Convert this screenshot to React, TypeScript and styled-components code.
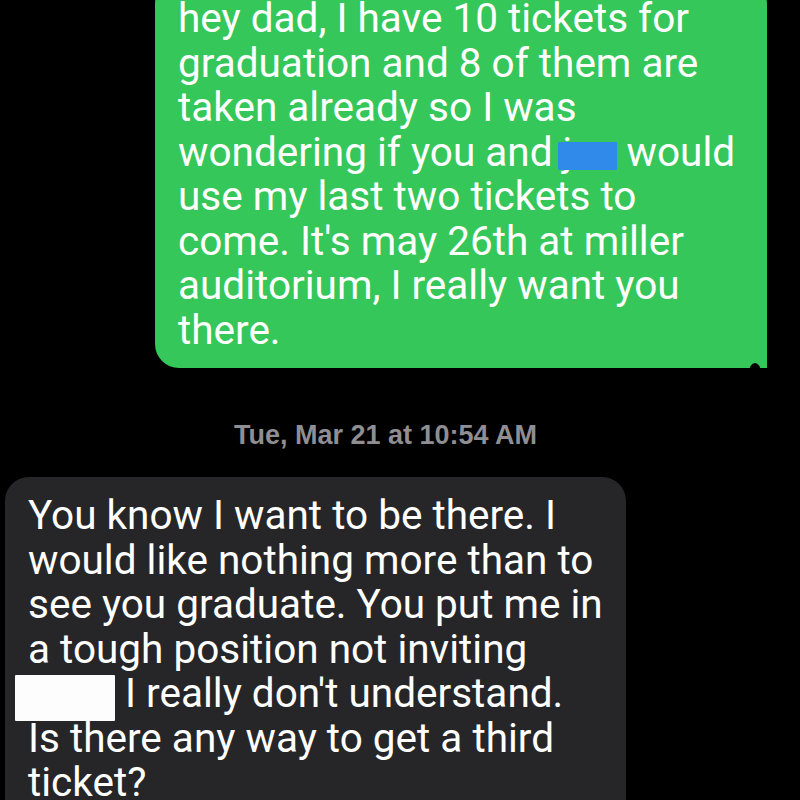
import styled, { createGlobalStyle } from "styled-components";

const GlobalStyle = createGlobalStyle`
    html, body {
        margin: 0;
        padding: 0;
        background: #000;
        overflow: hidden;
    }
`;

const Screen = styled.div`
    height: 800px;
    overflow: hidden;
    display: flex;
    flex-direction: column;
    background: #000;
    font-family: Roboto, "Liberation Sans", Arial, sans-serif;
`;

const Bubble = styled.div<{ $outgoing?: boolean }>`
    position: relative;
    box-sizing: border-box;
    align-self: flex-start;
    color: #fff;
    font-size: 40.5px;
    line-height: 44.5px;
    border-radius: 24px;
    white-space: nowrap;
    ${props => props.$outgoing ? `
        margin-left: 155px;
        margin-top: -20px;
        width: 612px;
        padding: 16px 20px 16px 23px;
        background: #35c759;
        border-bottom-right-radius: 0;

        &::after {
            content: "";
            position: absolute;
            right: 6px;
            bottom: -13px;
            width: 12px;
            height: 18px;
            border-radius: 50%;
            background: #000;
        }
    ` : `
        margin-left: 5px;
        margin-top: 27px;
        width: 621px;
        padding: 16px 20px 20px 23px;
        background: #262628;
    `}
`;

const Line = styled.div`
    display: block;
`;

interface RedactProps {
    $color: string,
    $width: number,
    $bleed: number,
    $top: number,
    $height: number,
}

const Redacted = styled.span<RedactProps>`
    position: relative;
    display: inline-block;
    width: ${props => props.$width}px;

    &::after {
        content: "";
        position: absolute;
        left: -${props => props.$bleed}px;
        right: 0;
        top: ${props => props.$top}px;
        height: ${props => props.$height}px;
        background: ${props => props.$color};
        border-radius: 1px;
    }
`;

const StampRow = styled.div`
    display: flex;
    justify-content: center;
    padding-right: 29px;
    margin-top: 52px;
`;

const Stamp = styled.span`
    color: #8e8e93;
    font-family: "Liberation Sans", Arial, sans-serif;
    font-size: 27px;
    font-weight: 700;
    line-height: 30px;
`;

export default function App()
{
    return (
        <Screen>
            <GlobalStyle />
            <Bubble $outgoing>
                <Line>hey dad, I have 10 tickets for</Line>
                <Line>graduation and 8 of them are</Line>
                <Line>taken already so I was</Line>
                <Line>
                    wondering if you and <Redacted $color="#2f8ae9" $width={54} $bleed={5} $top={12} $height={28}>j</Redacted> would
                </Line>
                <Line>use my last two tickets to</Line>
                <Line>come. It's may 26th at miller</Line>
                <Line>auditorium, I really want you</Line>
                <Line>there.</Line>
            </Bubble>
            <StampRow>
                <Stamp>Tue, Mar 21 at 10:54 AM</Stamp>
            </StampRow>
            <Bubble>
                <Line>You know I want to be there. I</Line>
                <Line>would like nothing more than to</Line>
                <Line>see you graduate. You put me in</Line>
                <Line>a tough position not inviting</Line>
                <Line>
                    <Redacted $color="#fdfdfd" $width={87} $bleed={13} $top={4} $height={46}>{"\u00a0"}</Redacted> I really don't understand.
                </Line>
                <Line>Is there any way to get a third</Line>
                <Line>ticket?</Line>
            </Bubble>
        </Screen>
    )
}
